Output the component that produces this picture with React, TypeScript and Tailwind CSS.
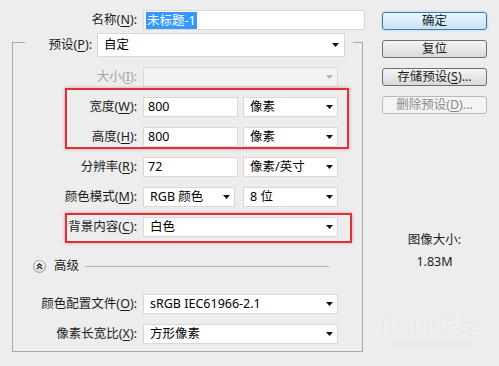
import React from "react";

const FONT = "font-['Noto_Sans','Noto_Sans_CJK_SC',sans-serif]";

function Arrow({ disabled = false }: { disabled?: boolean }) {
  return (
    <svg width="7" height="4" viewBox="0 0 7 4" className="shrink-0">
      <polygon points="0,0 7,0 3.5,4" fill={disabled ? "#b4b4b4" : "#111"} />
    </svg>
  );
}

function Label({ text, keyChar, width, disabled = false }: { text: string; keyChar: string; width: string; disabled?: boolean }) {
  return (
    <div className={`${width} shrink-0 text-right whitespace-nowrap ${disabled ? "text-[#a3a3a3]" : "text-[#1c1c1c]"}`}>
      {text}(<span className="underline underline-offset-2 decoration-1">{keyChar}</span>):
    </div>
  );
}

function Select({ value, width, disabled = false }: { value?: string; width: string; disabled?: boolean }) {
  return (
    <div
      className={`${width} h-[20px] flex items-center justify-between pl-[6px] pr-[4px] border ${
        disabled ? "bg-[#f3f3f3] border-[#dadada]" : "bg-white border-[#d8d8d8]"
      }`}
    >
      <span className="whitespace-nowrap">{value}</span>
      <Arrow disabled={disabled} />
    </div>
  );
}

function Field({ value, width }: { value: string; width: string }) {
  return (
    <div className={`${width} h-[20px] flex items-center pl-[4px] bg-white border border-[#d8d8d8]`}>
      {value}
    </div>
  );
}

function Button({ children, primary = false, disabled = false }: { children: React.ReactNode; primary?: boolean; disabled?: boolean }) {
  return (
    <div
      className={`h-[18px] w-[105px] rounded-[3px] border flex items-center justify-center whitespace-nowrap ${
        primary
          ? "border-[#3d7bad] bg-gradient-to-b from-[#eaf6fd] to-[#c6e2f3] shadow-[0_0_2px_#7fc4ea] text-[#1c1c1c]"
          : disabled
          ? "border-[#b5b9bc] bg-[#f4f4f4] text-[#8a8a8a]"
          : "border-[#6f6f6f] bg-gradient-to-b from-[#f5f5f5] to-[#d9d9d9] text-[#1c1c1c]"
      }`}
    >
      {children}
    </div>
  );
}

function Mn({ c }: { c: string }) {
  return <span className="underline underline-offset-2 decoration-1">{c}</span>;
}

export default function App() {
  return (
    <div className={`relative w-[499px] h-[366px] overflow-hidden bg-[#ededed] flex ${FONT} text-[12.5px] leading-[18px]`}>
      {/* Left: form */}
      <div className="w-[382px] shrink-0 flex flex-col pt-[10px]">
        <div className="flex items-center h-[20px]">
          <Label text="名称" keyChar="N" width="w-[137px]" />
          <div className="ml-[6px] w-[222px] h-[20px] flex items-center pl-[2px] bg-white border border-[#d8d8d8]">
            <span className="bg-[#3399ff] text-white px-[1px] leading-[17px]">未标题-1</span>
          </div>
        </div>

        {/* Group box */}
        <div className="mt-[12px] ml-[12px] w-[351px] border border-[#a8a8a8] flex flex-col pb-[7px]">
          <div className="-mt-[10px] ml-[12px] mr-[9px] h-[24px] flex items-center bg-[#ededed]">
            <Label text="预设" keyChar="P" width="w-[67px]" />
            <div className="ml-[5px] w-[248px] h-[24px] flex items-center justify-between pl-[6px] pr-[5px] bg-white border border-[#d8d8d8]">
              <span>自定</span>
              <Arrow />
            </div>
          </div>

          <div className="mt-[10px] flex flex-col gap-[10px]">
            <div className="flex items-center h-[20px]">
              <Label text="大小" keyChar="I" width="w-[124px]" disabled />
              <div className="ml-[6px]">
                <Select width="w-[195px]" disabled />
              </div>
            </div>
            <div className="flex items-center h-[20px]">
              <Label text="宽度" keyChar="W" width="w-[124px]" />
              <div className="ml-[6px] flex gap-[5px]">
                <Field value="800" width="w-[95px]" />
                <Select value="像素" width="w-[95px]" />
              </div>
            </div>
            <div className="flex items-center h-[20px]">
              <Label text="高度" keyChar="H" width="w-[124px]" />
              <div className="ml-[6px] flex gap-[5px]">
                <Field value="800" width="w-[95px]" />
                <Select value="像素" width="w-[95px]" />
              </div>
            </div>
            <div className="flex items-center h-[20px]">
              <Label text="分辨率" keyChar="R" width="w-[124px]" />
              <div className="ml-[6px] flex gap-[5px]">
                <Field value="72" width="w-[95px]" />
                <Select value="像素/英寸" width="w-[95px]" />
              </div>
            </div>
            <div className="flex items-center h-[20px]">
              <Label text="颜色模式" keyChar="M" width="w-[124px]" />
              <div className="ml-[6px] flex gap-[8px]">
                <Select value="RGB 颜色" width="w-[92px]" />
                <Select value="8 位" width="w-[95px]" />
              </div>
            </div>
            <div className="flex items-center h-[20px]">
              <Label text="背景内容" keyChar="C" width="w-[124px]" />
              <div className="ml-[6px]">
                <Select value="白色" width="w-[195px]" />
              </div>
            </div>
          </div>

          {/* Advanced */}
          <div className="mt-[22px] h-[14px] flex items-center pl-[20px] pr-[33px]">
            <svg width="13" height="13" viewBox="0 0 13 13" className="shrink-0">
              <defs>
                <linearGradient id="cg" x1="0" y1="0" x2="0" y2="1">
                  <stop offset="0" stopColor="#ffffff" />
                  <stop offset="1" stopColor="#d6d6d6" />
                </linearGradient>
              </defs>
              <circle cx="6.5" cy="6.5" r="6" fill="url(#cg)" stroke="#9c9c9c" />
              <path d="M4 6 L6.5 3.8 L9 6 M4 8.8 L6.5 6.6 L9 8.8" fill="none" stroke="#222" strokeWidth="1.3" />
            </svg>
            <span className="ml-[8px] text-[#1c1c1c]">高级</span>
            <div className="ml-[6px] flex-1 h-px bg-[#b0b0b0]" />
          </div>

          <div className="mt-[21px] flex flex-col gap-[10px]">
            <div className="flex items-center h-[20px]">
              <Label text="颜色配置文件" keyChar="O" width="w-[124px]" />
              <div className="ml-[6px]">
                <Select value="sRGB IEC61966-2.1" width="w-[195px]" />
              </div>
            </div>
            <div className="flex items-center h-[20px]">
              <Label text="像素长宽比" keyChar="X" width="w-[124px]" />
              <div className="ml-[6px]">
                <Select value="方形像素" width="w-[195px]" />
              </div>
            </div>
          </div>
        </div>
      </div>

      {/* Right: buttons + info */}
      <div className="w-[105px] shrink-0 flex flex-col pt-[12px]">
        <div className="flex flex-col gap-[10px]">
          <Button primary>确定</Button>
          <Button>复位</Button>
          <Button>
            存储预设(<Mn c="S" />)...
          </Button>
          <Button disabled>
            删除预设(<Mn c="D" />)...
          </Button>
        </div>
        <div className="mt-[118px] text-center leading-[16px] text-[#1c1c1c]">图像大小:</div>
        <div className="mt-[6px] text-center leading-[16px] text-[#1c1c1c]">1.83M</div>
      </div>

      {/* Red annotation boxes */}
      <div className="absolute left-[65px] top-[88px] w-[284px] h-[61px] border-2 border-[#d8343c] shadow-[0_0_3px_rgba(216,52,60,0.5)]" />
      <div className="absolute left-[65px] top-[213px] w-[287px] h-[30px] border-2 border-[#d8343c] shadow-[0_0_3px_rgba(216,52,60,0.5)]" />

      {/* Watermark */}
      <div className="absolute left-[382px] top-[312px] flex flex-col items-center text-white/70 [text-shadow:0_0_1px_#d0d0d0]">
        <div className="text-[21px] font-bold leading-[26px] font-['Liberation_Sans','Noto_Sans_CJK_SC',sans-serif]">Baidu经验</div>
        <div className="text-[10px] leading-[12px] font-['Liberation_Sans',sans-serif]">jingyan.baidu.com</div>
      </div>
    </div>
  );
}
